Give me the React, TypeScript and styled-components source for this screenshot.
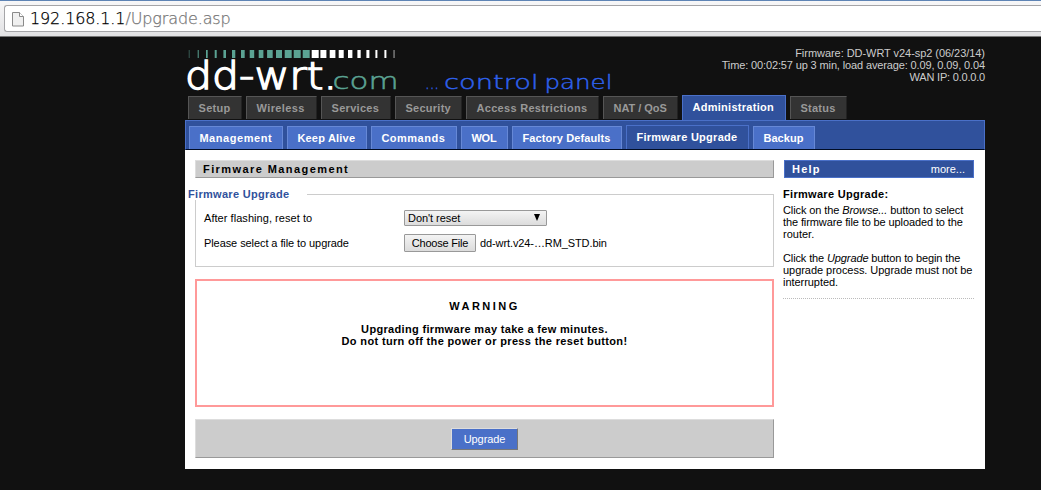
import React from 'react';
import styled, { createGlobalStyle } from 'styled-components';

const GlobalStyle = createGlobalStyle`
  * { box-sizing: border-box; }
  html, body { margin: 0; background: #111; overflow: hidden; }
  body { font: 11px/12px "Liberation Sans", Arial, sans-serif; color: #000; }
`;

const Tracked = styled.span<{ $ls?: number }>`
  letter-spacing: ${p => p.$ls ?? 0}px;
  white-space: nowrap;
`;

const BrowserBar = styled.header`
  height: 37px;
  padding: 4px 0 0 4px;
  border-top: 1px solid #5e84b5;
  border-bottom: 1px solid #777;
  background: linear-gradient(#f7f7f8, #e2e2e4);
`;
const AddressField = styled.div`
  display: flex;
  align-items: center;
  height: 27px;
  padding-left: 7px;
  border: 1px solid #a5a5a8;
  border-right: 0;
  border-radius: 3px 0 0 3px;
  background: #fff;
`;
const Url = styled.div`
  margin-left: 6px;
  font: 200 16px/24px "DejaVu Sans Light", "DejaVu Sans", sans-serif;
  letter-spacing: -0.12px;
  color: #777;
  -webkit-text-stroke: 0.25px currentColor;
  white-space: nowrap;
`;
const Host = styled.span`color: #000;`;

const Page = styled.main`
  width: 800px;
  margin-left: 185px;
`;
const Masthead = styled.div`
  display: flex;
  justify-content: space-between;
  height: 58px;
`;
const Status = styled.div`
  padding-top: 10px;
  color: #ccc;
  text-align: right;
`;

const MainTabs = styled.nav`
  display: flex;
  align-items: flex-end;
  gap: 4px;
  height: 25px;
  padding-left: 3px;
`;
const MainTab = styled.a<{ $w: number; $on?: boolean }>`
  width: ${p => p.$w}px;
  height: ${p => (p.$on ? 25 : 23)}px;
  margin-bottom: ${p => (p.$on ? 0 : 1)}px;
  padding: 5px 0 0 9.5px;
  border: 1px solid ${p => (p.$on ? '#4a70c8' : '#555')};
  border-right-color: ${p => (p.$on ? '#4a70c8' : '#222')};
  border-bottom: 0;
  background: ${p => (p.$on ? '#30519c' : '#333')};
  color: ${p => (p.$on ? '#fff' : '#999')};
  font-weight: bold;
`;
const SubTabs = styled.nav`
  display: flex;
  align-items: flex-end;
  gap: 4px;
  height: 30px;
  padding-left: 3px;
  border: 1px solid #4a70c8;
  border-bottom-color: #000c24;
  background: #30519c;
`;
const SubTab = styled.a<{ $w: number; $on?: boolean }>`
  width: ${p => p.$w}px;
  height: ${p => (p.$on ? 24 : 23)}px;
  padding: 5px 0 0 9.4px;
  border: 1px solid ${p => (p.$on ? '#4a70c8' : '#6688d6')};
  border-bottom: 0;
  background: ${p => (p.$on ? '#30519c' : '#4a70c8')};
  color: #fff;
  font-weight: bold;
`;

const Content = styled.div`
  display: flex;
  gap: 10px;
  height: 319px;
  padding: 10px 11px 0 10px;
  background: #fff;
`;
const FormColumn = styled.section`width: 579px;`;
const PanelTitle = styled.h2`
  height: 18px;
  margin: 0;
  padding: 2px 0 0 7px;
  border: 1px solid;
  border-color: #ddd #999 #999 #ddd;
  background: #ccc;
  font-size: 11px;
  line-height: 12px;
`;
const Group = styled.fieldset`
  height: 79px;
  min-width: 0;
  margin: 10px 0 12px;
  padding: 0 0 0 8px;
  border: 1px solid #ccc;
`;
const GroupLegend = styled.legend`
  width: 119px;
  height: 12px;
  margin-left: -16px;
  padding: 0;
  background: #fff;
  color: #30519c;
  font-weight: bold;
`;
const Row = styled.div`
  display: flex;
  align-items: center;
  height: 25px;
`;
const Rows = styled.div`padding-top: 5px;`;
const Label = styled.label`width: 200px;`;
const Control = styled.div`
  display: flex;
  align-items: center;
  border: 1px solid #999;
  border-radius: 1px;
  background: linear-gradient(#f4f4f4, #dcdcdc);
`;
const Select = styled(Control)`
  width: 143px;
  height: 16px;
  padding: 0 6px 0 3px;
  justify-content: space-between;
`;
const FileButton = styled(Control)`
  width: 72px;
  height: 18px;
  margin-right: 4px;
  justify-content: center;
`;
const Warning = styled.div`
  height: 128px;
  padding-top: 19px;
  border: 2px solid #f99;
  font-weight: bold;
  text-align: center;
`;
const WarningTitle = styled.div`margin-bottom: 11px;`;
const Footer = styled.div`
  display: flex;
  justify-content: center;
  align-items: flex-start;
  height: 39px;
  margin-top: 12px;
  padding-top: 8px;
  border: 1px solid;
  border-color: #ddd #999 #999 #ddd;
  background: #ccc;
`;
const Submit = styled.button`
  width: 67px;
  height: 22px;
  padding: 0;
  border: 1px solid;
  border-color: #ddd #777 #777 #ddd;
  background: #4a70c8;
  color: #fff;
  font: inherit;
`;

const HelpColumn = styled.aside`width: 190px;`;
const HelpTitle = styled.div`
  display: flex;
  justify-content: space-between;
  height: 18px;
  padding: 2px 8px 0 7px;
  border: 1px solid #4a70c8;
  background: #30519c;
  color: #fff;
`;
const HelpBody = styled.div`
  height: 121px;
  margin-left: -1px;
  padding-top: 10px;
  border-bottom: 1px dotted #bbb;
`;
const HelpHeading = styled.div`
  margin-bottom: 4px;
  font-weight: bold;
`;
const HelpLine = styled(Tracked)`display: block;`;
const HelpParagraph = styled.p`margin: 0 0 12px;`;

const mainTabs: [string, number, number][] = [
  ['Setup', 54, 0.3], ['Wireless', 71, 0.4], ['Services', 70, 0.3], ['Security', 67, 0.25],
  ['Access Restrictions', 133, 0.3], ['NAT / QoS', 75, -0.03], ['Administration', 104, 0.28], ['Status', 57, 0.25],
];
const subTabs: [string, number, number][] = [
  ['Management', 94, 0.55], ['Keep Alive', 80, 0.2], ['Commands', 86, 0.5], ['WOL', 47, -0.2],
  ['Factory Defaults', 110, 0.12], ['Firmware Upgrade', 123, 0.28], ['Backup', 62, 0.08],
];

/* [x, width] of each tick above the wordmark */
const ticks: [number, number][] = [
  [4, 1], [13, 1], [21.3, 1.7], [30, 2], [38.7, 2.6], [47.3, 3.3], [56.3, 3.7], [65, 4.5], [74, 4.7], [82.4, 5.6],
  [91.3, 6], [100, 7], [109, 7], [118, 7], [127, 7], [135.7, 6], [145, 5.7], [154, 5], [163.3, 4.4],
  [172.7, 3.3], [181.7, 3], [190.7, 2], [199.7, 2], [208.7, 1.3],
];

const BrandSvg = styled.svg`
  display: block;
  overflow: visible;
  font-family: "DejaVu Sans Light", "DejaVu Sans", sans-serif;
  font-weight: 200;
`;

type WordProps = { x: number; size: number; length: number; color: string; stroke: number; children: string };
const Word = ({ x, size, length, color, stroke, children }: WordProps) => (
  <text x={x} y="52.3" fontSize={size} textLength={length} lengthAdjust="spacingAndGlyphs"
    fill={color} stroke={color} strokeWidth={stroke}>{children}</text>
);

const Brand = () => (
  <BrandSvg width="440" height="58" viewBox="0 0 440 58">
    {ticks.map(([x, w], i) => (
      <rect key={x} x={x - 0.3} y="13" width={w} height="8"
        fill={i < 14 ? '#5ba393' : '#fff'} opacity={i === 0 || i === 23 ? 0.5 : 1} />
    ))}
    <Word x={0} size={37} length={152} color="#fff" stroke={1.4}>dd-wrt.</Word>
    <Word x={147.5} size={23} length={66} color="#5ba393" stroke={0.5}>com</Word>
    <Word x={240} size={19.5} length={14} color="#2f62ee" stroke={0.4}>...</Word>
    <Word x={259} size={19.5} length={94.5} color="#2f62ee" stroke={0.4}>control</Word>
    <Word x={359.5} size={19.5} length={68} color="#2f62ee" stroke={0.4}>panel</Word>
  </BrandSvg>
);

export default function App() {
  return (
    <>
      <GlobalStyle />
      <BrowserBar>
        <AddressField>
          <svg width="12" height="16" viewBox="0 0 12 16">
            <path d="M.5 1.5h7l4 4v9.5H.5z" fill="#f0f0f0" stroke="#8a8a8a" />
            <path d="M7.5 1.5v4h4" fill="#fff" stroke="#8a8a8a" />
          </svg>
          <Url><Host>192.168.1.1</Host>/Upgrade.asp</Url>
        </AddressField>
      </BrowserBar>
      <Page>
        <Masthead>
          <Brand />
          <Status>
            <div><Tracked $ls={-0.05}>Firmware: DD-WRT v24-sp2 (06/23/14)</Tracked></div>
            <div><Tracked $ls={-0.13}>Time: 00:02:57 up 3 min, load average: 0.09, 0.09, 0.04</Tracked></div>
            <div><Tracked $ls={-0.2}>WAN IP: 0.0.0.0</Tracked></div>
          </Status>
        </Masthead>
        <MainTabs>
          {mainTabs.map(([t, w, ls]) => (
            <MainTab key={t} $w={w} $on={t === 'Administration'}><Tracked $ls={ls}>{t}</Tracked></MainTab>
          ))}
        </MainTabs>
        <SubTabs>
          {subTabs.map(([t, w, ls]) => (
            <SubTab key={t} $w={w} $on={t === 'Firmware Upgrade'}><Tracked $ls={ls}>{t}</Tracked></SubTab>
          ))}
        </SubTabs>
        <Content>
          <FormColumn>
            <PanelTitle><Tracked $ls={1.42}>Firmware Management</Tracked></PanelTitle>
            <Group>
              <GroupLegend><Tracked $ls={0.3}>Firmware Upgrade</Tracked></GroupLegend>
              <Rows>
                <Row>
                  <Label><Tracked $ls={0.05}>After flashing, reset to</Tracked></Label>
                  <Select>
                    <Tracked $ls={-0.05}>Don't reset</Tracked>
                    <svg width="6" height="7" viewBox="0 0 6 7"><path d="M0 0h6L3 7z" /></svg>
                  </Select>
                </Row>
                <Row>
                  <Label><Tracked $ls={-0.08}>Please select a file to upgrade</Tracked></Label>
                  <FileButton><Tracked $ls={-0.2}>Choose File</Tracked></FileButton>
                  <Tracked $ls={-0.1}>dd-wrt.v24-…RM_STD.bin</Tracked>
                </Row>
              </Rows>
            </Group>
            <Warning>
              <WarningTitle><Tracked $ls={2.5}>WARNING</Tracked></WarningTitle>
              <div><Tracked $ls={0.33}>Upgrading firmware may take a few minutes.</Tracked></div>
              <div><Tracked $ls={0.35}>Do not turn off the power or press the reset button!</Tracked></div>
            </Warning>
            <Footer><Submit><Tracked $ls={-0.1}>Upgrade</Tracked></Submit></Footer>
          </FormColumn>
          <HelpColumn>
            <HelpTitle><Tracked as="b" $ls={1.2}>Help</Tracked><Tracked>more...</Tracked></HelpTitle>
            <HelpBody>
              <HelpHeading><Tracked $ls={0.3}>Firmware Upgrade:</Tracked></HelpHeading>
              <HelpParagraph>
                <HelpLine $ls={-0.1}>Click on the <i>Browse...</i> button to select</HelpLine>
                <HelpLine $ls={-0.11}>the firmware file to be uploaded to the</HelpLine>
                <HelpLine>router.</HelpLine>
              </HelpParagraph>
              <HelpParagraph>
                <HelpLine $ls={-0.12}>Click the <i>Upgrade</i> button to begin the</HelpLine>
                <HelpLine $ls={-0.04}>upgrade process. Upgrade must not be</HelpLine>
                <HelpLine $ls={-0.05}>interrupted.</HelpLine>
              </HelpParagraph>
            </HelpBody>
          </HelpColumn>
        </Content>
      </Page>
    </>
  );
}
